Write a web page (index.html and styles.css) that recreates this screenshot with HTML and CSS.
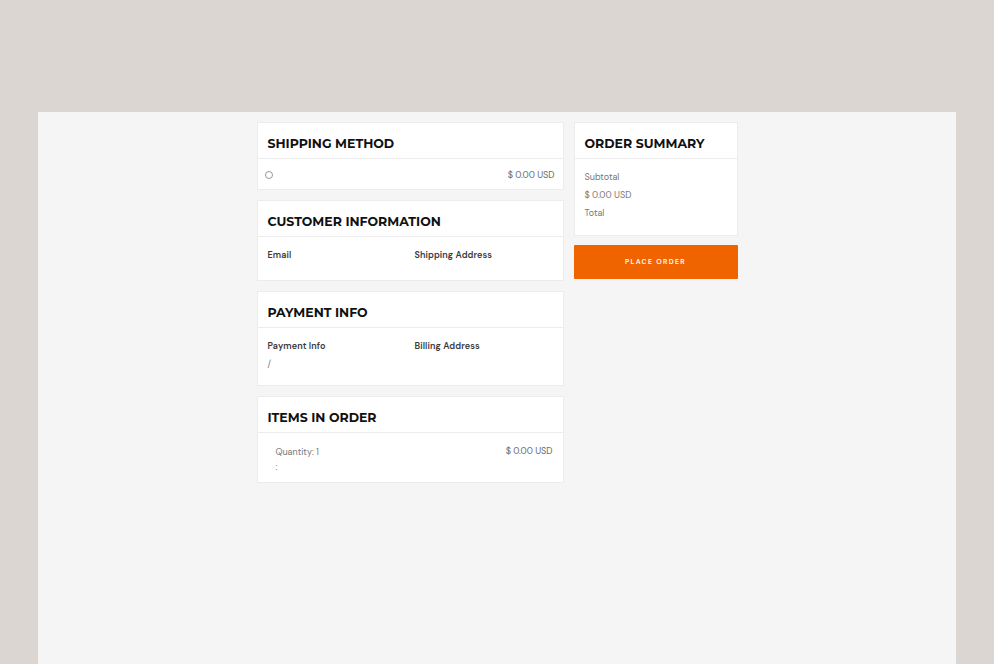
FILE: index.html
```html
<!DOCTYPE html>
<html lang="en">
<head>
    <meta charset="UTF-8">
    <meta name="viewport" content="width=device-width, initial-scale=1.0">
    <title>Checkout</title>
    <link rel="stylesheet" href="styles.css">
</head>
<body>
    <div class="page">
        <div class="checkout">
            <div class="main-col">
                <div class="card">
                    <div class="card-head"><h4>Shipping Method</h4></div>
                    <div class="card-body ship-row">
                        <span class="radio"></span>
                        <span class="price">$ 0.00 USD</span>
                    </div>
                </div>

                <div class="card">
                    <div class="card-head"><h4>Customer Information</h4></div>
                    <div class="card-body info-grid customer">
                        <div><div class="label">Email</div></div>
                        <div><div class="label">Shipping Address</div></div>
                    </div>
                </div>

                <div class="card">
                    <div class="card-head"><h4>Payment Info</h4></div>
                    <div class="card-body info-grid payment">
                        <div>
                            <div class="label">Payment Info</div>
                            <div class="value">/</div>
                        </div>
                        <div><div class="label">Billing Address</div></div>
                    </div>
                </div>

                <div class="card">
                    <div class="card-head"><h4>Items in Order</h4></div>
                    <div class="card-body item-row">
                        <div>
                            <div class="small">Quantity: 1</div>
                            <div class="small">:</div>
                        </div>
                        <span class="price">$ 0.00 USD</span>
                    </div>
                </div>
            </div>

            <div class="side-col">
                <div class="card">
                    <div class="card-head"><h4>Order Summary</h4></div>
                    <div class="card-body summary">
                        <div class="small">Subtotal</div>
                        <div class="small">$ 0.00 USD</div>
                        <div class="small">Total</div>
                    </div>
                </div>
                <a href="#" class="order-btn">Place Order</a>
            </div>
        </div>
    </div>
</body>
</html>
```

FILE: styles.css
```css
html, body {
    margin: 0;
    padding: 0;
}

body {
    background-color: #dbd6d2;
    font-family: "DM Sans", Inter, "Liberation Sans", sans-serif;
    color: #333;
}

.page {
    margin: 112px 38px 0 38px;
    min-height: 552px;
    background-color: #f5f5f5;
    padding-top: 10px;
}

.checkout {
    display: flex;
    gap: 10px;
    justify-content: center;
    align-items: flex-start;
}

.main-col {
    width: 307px;
    display: flex;
    flex-direction: column;
    gap: 10px;
}

.side-col {
    width: 164px;
    display: flex;
    flex-direction: column;
    gap: 9px;
}

.card {
    background-color: #fff;
    border: 1px solid #ececec;
}

.card-head {
    height: 35px;
    display: flex;
    align-items: center;
    padding: 0 10px;
    border-bottom: 1px solid #ececec;
}

.card-head h4 {
    margin: 6px 0 0 0;
    font-family: Montserrat, Inter, "Liberation Sans", sans-serif;
    font-size: 12.5px;
    font-weight: 700;
    text-transform: uppercase;
    color: #111;
}

.card-body {
    padding: 10px;
}

.ship-row {
    height: 11px;
    display: flex;
    justify-content: space-between;
    align-items: center;
    padding: 10px 8px 9px 7px;
}

.radio {
    width: 6px;
    height: 6px;
    border: 1px solid #999;
    border-radius: 50%;
}

.price {
    font-size: 9px;
    color: #666;
}

.info-grid {
    display: grid;
    grid-template-columns: 147px 1fr;
}

.info-grid.customer {
    padding: 12px 10px 15px 10px;
    min-height: 16px;
}

.info-grid.payment {
    padding: 12px 10px 15px 10px;
}

.label {
    font-size: 9px;
    font-weight: 600;
    color: #3a3a3a;
    letter-spacing: 0.1px;
    line-height: 12px;
}

.value {
    font-size: 9px;
    color: #777;
    margin-top: 6px;
    line-height: 12px;
}

.item-row {
    display: flex;
    justify-content: space-between;
    align-items: flex-start;
    padding: 12px 10px 7px 18px;
}

.item-row .small {
    line-height: 15px;
}

.small {
    font-size: 9px;
    color: #777;
    line-height: 18px;
}

.summary {
    padding: 9px 10px 13px 10px;
}

.order-btn {
    display: block;
    height: 34px;
    line-height: 34px;
    background-color: #f06400;
    color: #fff;
    text-align: center;
    text-decoration: none;
    font-size: 7px;
    font-weight: 600;
    letter-spacing: 1.3px;
    text-transform: uppercase;
    border-radius: 1px;
}
```
